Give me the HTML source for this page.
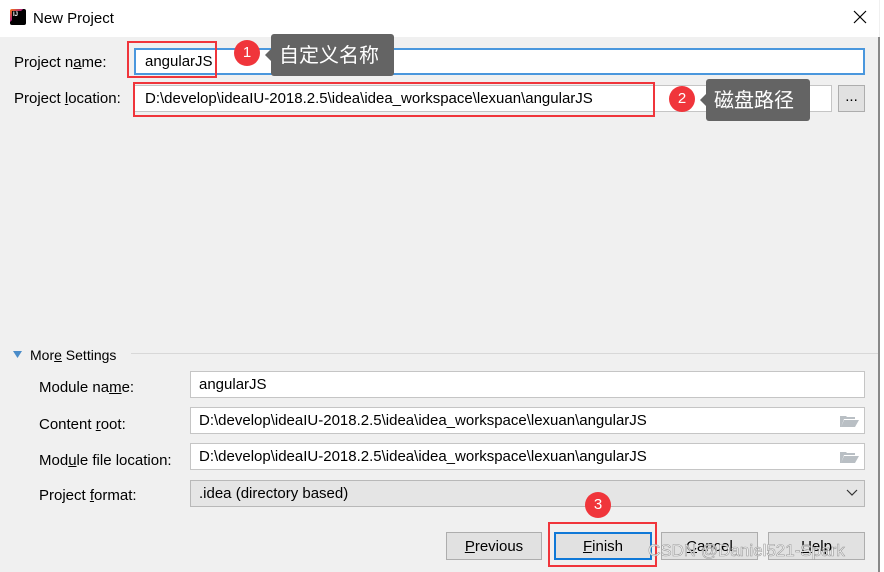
<!DOCTYPE html>
<html><head><meta charset="utf-8"><style>
*{box-sizing:border-box;margin:0;padding:0}
body{width:884px;height:572px;overflow:hidden;background:#f0f0f0;font-family:"Liberation Sans","Noto Sans CJK SC",sans-serif;font-size:15px;color:#000;position:relative}
.a{position:absolute}
.title{left:0;top:0;width:879px;height:37px;background:#fff}
.inp{position:absolute;background:#fff;border:1px solid #c5c5c5;padding-left:8px;line-height:26px;font-size:15px;white-space:nowrap;overflow:hidden}
.red{position:absolute;border:2px solid #f0353b}
.badge{position:absolute;width:26px;height:26px;border-radius:50%;background:#f0353b;color:#fff;text-align:center;line-height:26px;font-size:15px}
.tip{position:absolute;background:#646464;border-radius:3px;color:#fff;font-size:20px;font-family:"Noto Sans CJK SC",sans-serif;line-height:40px;padding-left:8px}
.tip:before{content:"";position:absolute;left:-6px;top:15px;border:6px solid transparent;border-left:0;border-right-color:#646464}
.lbl{position:absolute;left:39px;font-size:15px}
.btn{position:absolute;top:532px;height:28px;background:#e1e1e1;border:1px solid #adadad;text-align:center;line-height:27px;font-size:15px}
u{text-decoration:underline}
</style></head><body>
<div class="a title"></div>
<div class="a" style="left:10px;top:9px;width:16px;height:16px;background:#000;border-radius:2px;background:linear-gradient(135deg,#f97a12 0%,#b0227b 40%,#000 42%);"></div>
<div class="a" style="left:12px;top:11px;width:12px;height:12px;background:#000;color:#fff;font-size:6px;font-weight:bold;line-height:8px;padding-left:1px">IJ</div>
<div class="a" style="left:33px;top:10px;font-size:15px">New Project</div>
<svg class="a" style="left:853px;top:10px" width="14" height="14"><path d="M1 1L13 13M13 1L1 13" stroke="#000" stroke-width="1.2"/></svg>
<div class="a" style="left:878px;top:37px;width:2px;height:535px;background:#888"></div>
<div class="a" style="left:880px;top:0;width:4px;height:572px;background:#fff"></div>

<div class="a" style="left:14px;top:54px">Project n<u>a</u>me:</div>
<div class="inp" style="left:134px;top:48px;width:731px;height:27px;border:2px solid #4a97dd;padding-left:9px;line-height:24px">angularJS</div>
<div class="red" style="left:127px;top:41px;width:90px;height:37px"></div>
<div class="badge" style="left:234px;top:40px">1</div>
<div class="tip" style="left:271px;top:34px;width:123px;height:42px">自定义名称</div>

<div class="a" style="left:14px;top:90px">Project <u>l</u>ocation:</div>
<div class="inp" style="left:134px;top:85px;width:698px;height:27px;padding-left:10px">D:\develop\ideaIU-2018.2.5\idea\idea_workspace\lexuan\angularJS</div>
<div class="btn" style="left:838px;top:85px;width:27px;height:27px;line-height:22px">...</div>
<div class="red" style="left:133px;top:82px;width:522px;height:35px"></div>
<div class="badge" style="left:669px;top:86px">2</div>
<div class="tip" style="left:706px;top:79px;width:104px;height:42px">磁盘路径</div>

<svg class="a" style="left:13px;top:351px" width="10" height="8"><path d="M0 0H9L4.5 7Z" fill="#4a8cc9"/></svg>
<div class="a" style="left:30px;top:347px;font-size:14px">Mor<u>e</u> Settings</div>
<div class="a" style="left:131px;top:353px;width:747px;height:1px;background:#d8d8d8"></div>

<div class="lbl" style="top:379px">Module na<u>m</u>e:</div>
<div class="inp" style="left:190px;top:371px;width:675px;height:27px">angularJS</div>
<div class="lbl" style="top:416px">Content <u>r</u>oot:</div>
<div class="inp" style="left:190px;top:407px;width:675px;height:27px">D:\develop\ideaIU-2018.2.5\idea\idea_workspace\lexuan\angularJS</div>
<div class="lbl" style="top:452px">Mod<u>u</u>le file location:</div>
<div class="inp" style="left:190px;top:443px;width:675px;height:27px">D:\develop\ideaIU-2018.2.5\idea\idea_workspace\lexuan\angularJS</div>
<svg class="a" style="left:840px;top:414px" width="19" height="14"><path d="M0 2H6L7 3H15V5H4L1 13H0Z M4 6H19L15 13H1Z" fill="#b9bfc4"/></svg>
<svg class="a" style="left:840px;top:450px" width="19" height="14"><path d="M0 2H6L7 3H15V5H4L1 13H0Z M4 6H19L15 13H1Z" fill="#b9bfc4"/></svg>
<div class="lbl" style="top:487px">Project <u>f</u>ormat:</div>
<div class="inp" style="left:190px;top:480px;width:675px;height:27px;background:#e5e5e5;border-color:#b8b8b8">.idea (directory based)</div>
<svg class="a" style="left:846px;top:489px" width="12" height="8"><path d="M1 1L6 6L11 1" stroke="#333" fill="none" stroke-width="1.2"/></svg>

<div class="btn" style="left:446px;width:96px"><u>P</u>revious</div>
<div class="btn" style="left:554px;width:98px;border:2px solid #0f78d7;line-height:25px"><u>F</u>inish</div>
<div class="btn" style="left:661px;width:97px"><u>C</u>ancel</div>
<div class="btn" style="left:768px;width:97px"><u>H</u>elp</div>
<div class="red" style="left:548px;top:522px;width:109px;height:45px"></div>
<div class="badge" style="left:585px;top:492px">3</div>
<div class="a" style="left:648px;top:541px;font-size:17px;color:rgba(255,255,255,.8);-webkit-text-stroke:0.6px #9a9a9a">CSDN @Daniel521-Spark</div>
</body></html>
